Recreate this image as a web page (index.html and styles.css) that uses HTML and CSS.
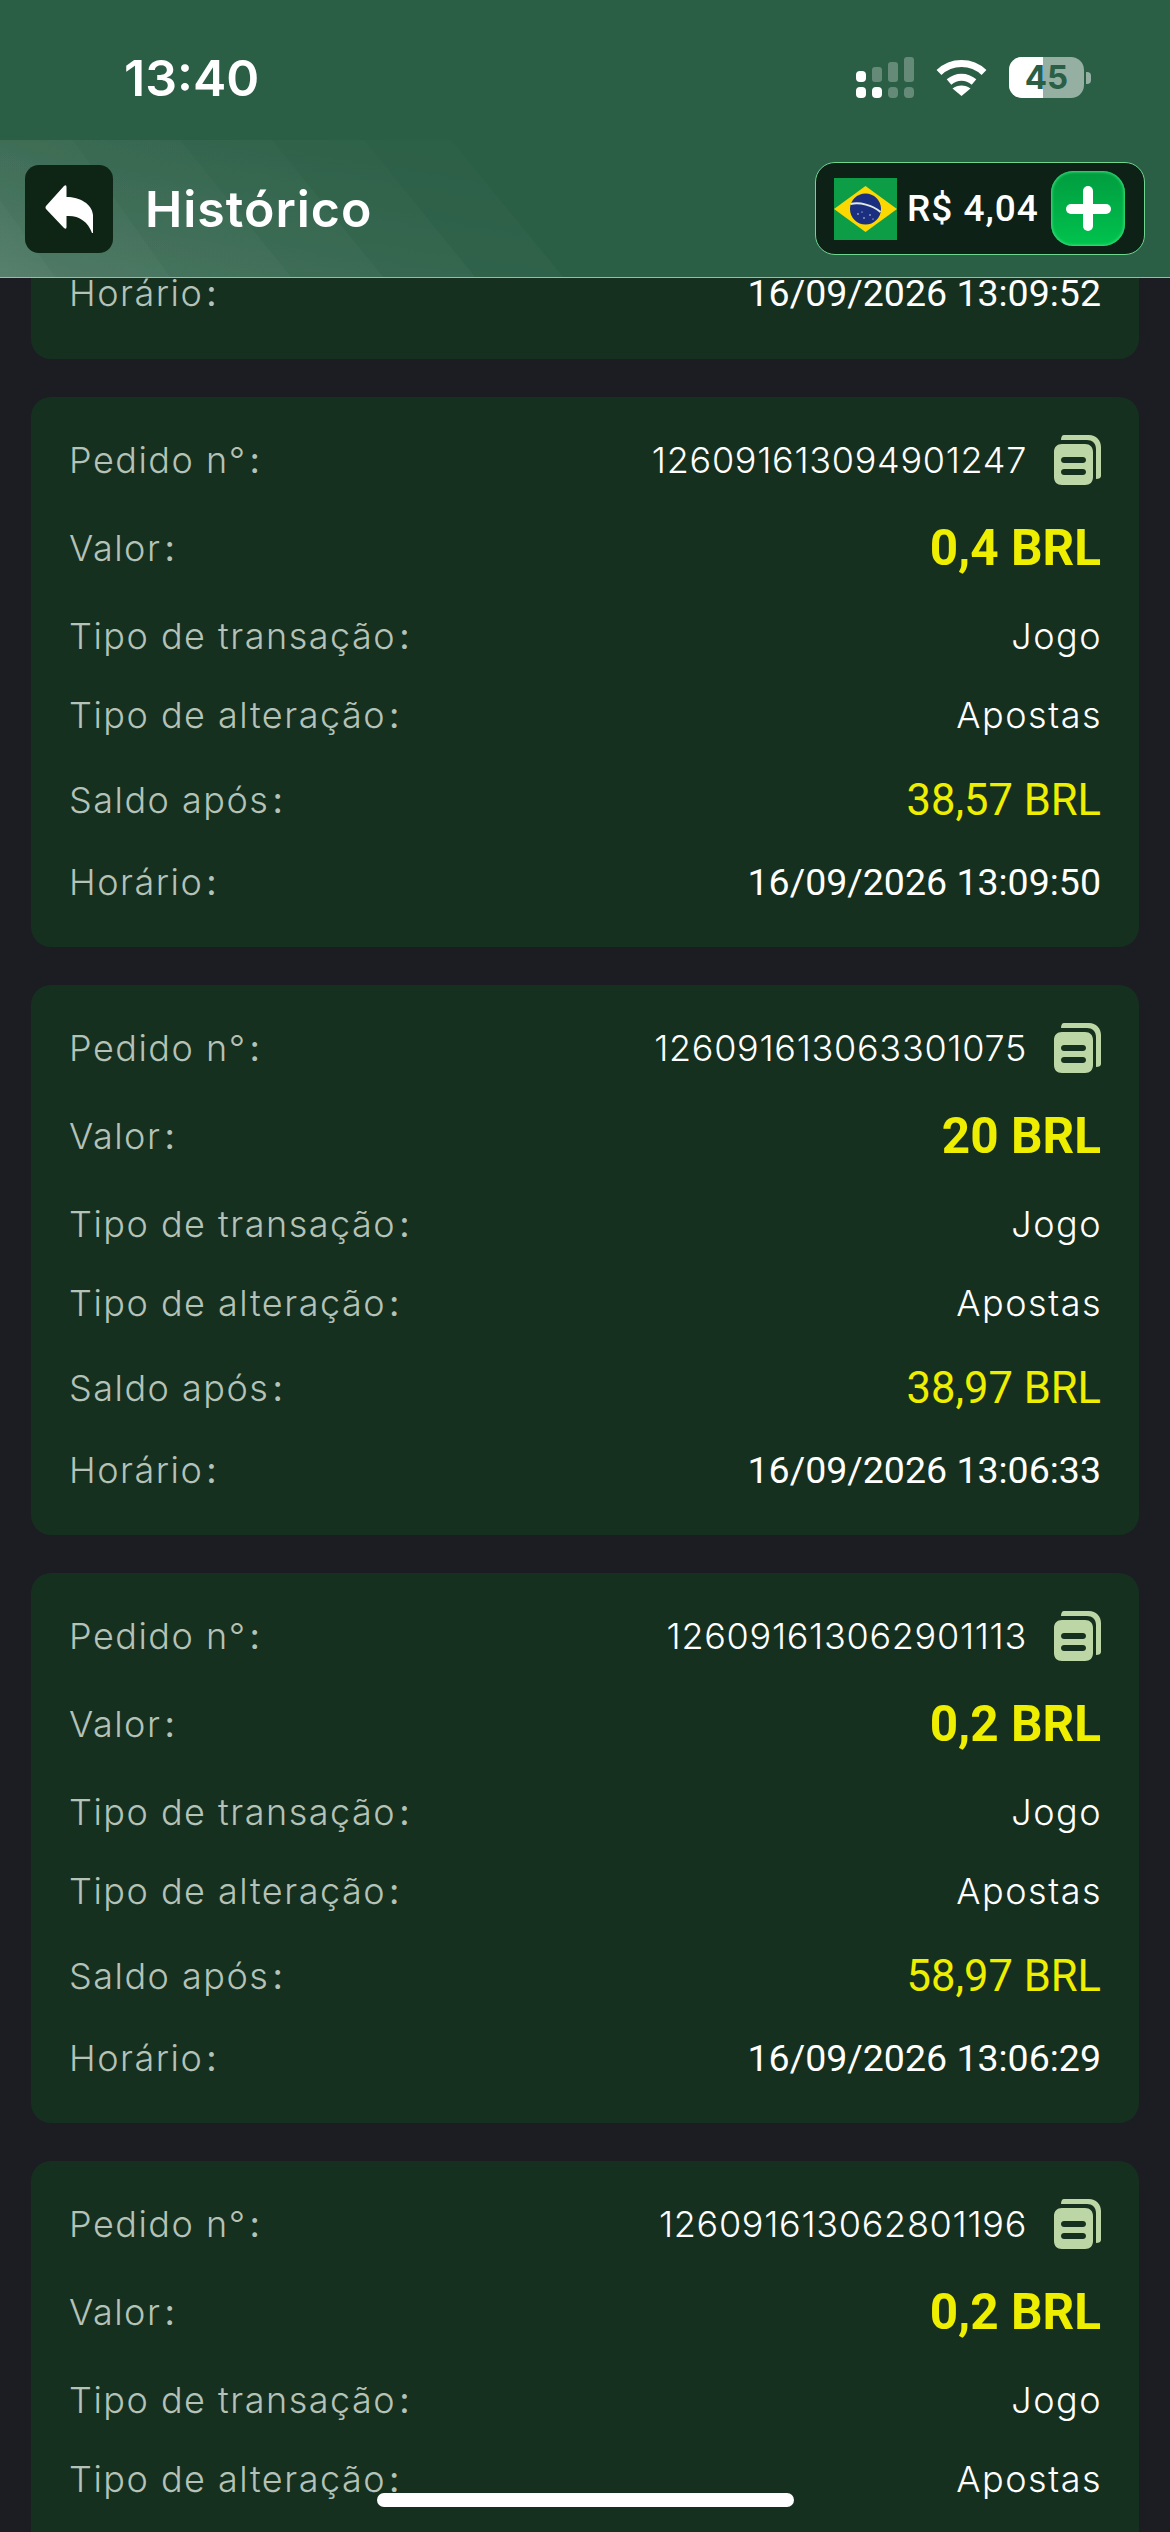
FILE: index.html
```html
<!DOCTYPE html>
<html lang="pt-BR">
<head>
<meta charset="utf-8">
<title>Histórico</title>
<link rel="stylesheet" href="styles.css">
</head>
<body>
<svg class="defs" width="0" height="0" aria-hidden="true">
  <symbol id="copy" viewBox="0 0 47 50">
    <path fill="#bcd6a6" d="M10 0H35C42 0 47 5 47 12V41C47 43 45 44 42 44V14C42 8 38 5 33 5H7C7 2 8 0 10 0Z"/>
    <path fill="#bcd6a6" fill-rule="evenodd" d="M8 9H31C36 9 39 12 39 17V42C39 47 36 50 31 50H8C3 50 0 47 0 42V17C0 12 3 9 8 9ZM10 22C8.500 22 7 23.200 7 25S8.500 28 10 28H29C30.500 28 32 26.800 32 25S30.500 22 29 22ZM10 34C8.500 34 7 35.200 7 37S8.500 40 10 40H29C30.500 40 32 38.800 32 37S30.500 34 29 34Z"/>
  </symbol>
</svg>

<header class="top">
  <svg class="stripes" viewBox="0 0 600 137" width="600" height="137" aria-hidden="true">
    <defs>
      <linearGradient id="fade" x1="0" y1="1" x2="0.7" y2="0">
        <stop offset="0" stop-color="#fff" stop-opacity="0.04"/>
        <stop offset="1" stop-color="#fff" stop-opacity="0.012"/>
      </linearGradient>
    </defs>
    <polygon fill="url(#fade)" points="0,60 0,137 55,137"/>
    <polygon fill="url(#fade)" points="0,0 73,0 170,137 0,137"/>
    <polygon fill="url(#fade)" points="0,0 180,0 291,137 0,137"/>
    <polygon fill="url(#fade)" points="0,0 272,0 383,137 0,137"/>
    <polygon fill="url(#fade)" points="0,0 364,0 475,137 0,137"/>
    <polygon fill="url(#fade)" points="0,0 451,0 563,137 0,137"/>
  </svg>
  <div class="status">
    <span class="clock">13:40</span>
    <div class="status-icons">
      <div class="signal">
        <i class="dot on"></i><i class="bar b1"></i><i class="bar b2"></i><i class="bar b3"></i>
        <i class="dot on"></i><i class="dot on"></i><i class="dot"></i><i class="dot"></i>
      </div>
      <svg class="wifi" viewBox="0 0 51 37" width="51" height="37" aria-hidden="true">
        <path d="M3 13.500C15.500 1.500 35.500 1.500 48 13.500" fill="none" stroke="#fff" stroke-width="7"/>
        <path d="M13 23C20.500 16.500 30.500 16.500 38 23" fill="none" stroke="#fff" stroke-width="7"/>
        <path d="M16.500 29.500C21.500 25.500 29.500 25.500 34.500 29.500L25.500 37Z" fill="#fff"/>
      </svg>
      <div class="battery"><div class="battery-level"></div><span class="battery-num">45</span></div>
      <i class="battery-nub"></i>
    </div>
  </div>
  <div class="bar-nav">
    <button class="back" type="button" aria-label="Voltar">
      <svg viewBox="0 0 48 48" width="48" height="48" aria-hidden="true">
        <path fill="#fff" d="M19 1L1 21Q0 22.500 1 24L19 43Q21.500 45 21.500 42V31C33 30 43 36 47 48H48V30C47 19 35 12 21.500 12V2Q21.500 -1 19 1Z"/>
      </svg>
    </button>
    <h1 class="title">Histórico</h1>
    <div class="wallet">
      <svg class="flag" viewBox="0 0 63 62" width="63" height="62" aria-hidden="true">
        <rect width="63" height="62" fill="#0c9d46"/>
        <polygon points="31.500,8 63,31 31.500,54 0,31" fill="#fcd803"/>
        <circle cx="31.500" cy="31" r="15.500" fill="#1a2f80"/>
        <path d="M16.500 26C26 24 38 27 46.500 34" fill="none" stroke="#dfe9e4" stroke-width="2"/>
        <g fill="#fff"><circle cx="24" cy="36" r=".7"/><circle cx="30" cy="40" r=".7"/><circle cx="36" cy="37" r=".7"/><circle cx="28" cy="34" r=".6"/><circle cx="39" cy="41" r=".6"/></g>
      </svg>
      <span class="wallet-amount">R$ 4,04</span>
      <button class="add" type="button" aria-label="Adicionar"><i class="add-h"></i><i class="add-v"></i></button>
    </div>
  </div>
</header>

<main class="list">
  <article class="card card-tail">
    <div class="row row-last"><span class="label">Horário<b class="colon">:</b></span><span class="time">16/09/2026 13:09:52</span></div>
  </article>

  <article class="card">
    <div class="row"><span class="label">Pedido n°<b class="colon">:</b></span><span class="order"><span class="value id">126091613094901247</span><svg class="copy" width="47" height="50"><use href="#copy"/></svg></span></div>
    <div class="row row-amount"><span class="label">Valor<b class="colon">:</b></span><span class="amount">0,4 BRL</span></div>
    <div class="row row-type"><span class="label">Tipo de transação<b class="colon">:</b></span><span class="value">Jogo</span></div>
    <div class="row row-change"><span class="label">Tipo de alteração<b class="colon">:</b></span><span class="value">Apostas</span></div>
    <div class="row row-balance"><span class="label">Saldo após<b class="colon">:</b></span><span class="balance">38,57 BRL</span></div>
    <div class="row row-last"><span class="label">Horário<b class="colon">:</b></span><span class="time">16/09/2026 13:09:50</span></div>
  </article>

  <article class="card">
    <div class="row"><span class="label">Pedido n°<b class="colon">:</b></span><span class="order"><span class="value id">126091613063301075</span><svg class="copy" width="47" height="50"><use href="#copy"/></svg></span></div>
    <div class="row row-amount"><span class="label">Valor<b class="colon">:</b></span><span class="amount">20 BRL</span></div>
    <div class="row row-type"><span class="label">Tipo de transação<b class="colon">:</b></span><span class="value">Jogo</span></div>
    <div class="row row-change"><span class="label">Tipo de alteração<b class="colon">:</b></span><span class="value">Apostas</span></div>
    <div class="row row-balance"><span class="label">Saldo após<b class="colon">:</b></span><span class="balance">38,97 BRL</span></div>
    <div class="row row-last"><span class="label">Horário<b class="colon">:</b></span><span class="time">16/09/2026 13:06:33</span></div>
  </article>

  <article class="card">
    <div class="row"><span class="label">Pedido n°<b class="colon">:</b></span><span class="order"><span class="value id">126091613062901113</span><svg class="copy" width="47" height="50"><use href="#copy"/></svg></span></div>
    <div class="row row-amount"><span class="label">Valor<b class="colon">:</b></span><span class="amount">0,2 BRL</span></div>
    <div class="row row-type"><span class="label">Tipo de transação<b class="colon">:</b></span><span class="value">Jogo</span></div>
    <div class="row row-change"><span class="label">Tipo de alteração<b class="colon">:</b></span><span class="value">Apostas</span></div>
    <div class="row row-balance"><span class="label">Saldo após<b class="colon">:</b></span><span class="balance">58,97 BRL</span></div>
    <div class="row row-last"><span class="label">Horário<b class="colon">:</b></span><span class="time">16/09/2026 13:06:29</span></div>
  </article>

  <article class="card">
    <div class="row"><span class="label">Pedido n°<b class="colon">:</b></span><span class="order"><span class="value id">126091613062801196</span><svg class="copy" width="47" height="50"><use href="#copy"/></svg></span></div>
    <div class="row row-amount"><span class="label">Valor<b class="colon">:</b></span><span class="amount">0,2 BRL</span></div>
    <div class="row row-type"><span class="label">Tipo de transação<b class="colon">:</b></span><span class="value">Jogo</span></div>
    <div class="row row-change"><span class="label">Tipo de alteração<b class="colon">:</b></span><span class="value">Apostas</span></div>
  </article>
</main>

<div class="home-indicator"></div>
</body>
</html>
```
FILE: styles.css
```css
* { box-sizing: border-box; }
html, body { margin: 0; height: 2532px; overflow: hidden; }
body { position: relative; background: #1b1d22; font-family: "Inter", "Liberation Sans", sans-serif; color: #fff; }
.defs { position: absolute; }

/* Header overlays the scrolled list */
.top { position: absolute; top: 0; left: 0; right: 0; z-index: 2; height: 278px; background: #2a5e45; border-bottom: 1px solid #6fd68f; overflow: hidden; }
.stripes { position: absolute; left: 0; bottom: 0; }
.status { position: relative; display: flex; justify-content: space-between; height: 140px; padding: 57px 79px 0 124px; }
.clock { font-size: 50px; line-height: 42px; font-weight: 600; letter-spacing: 0; }
.status-icons { display: flex; align-items: flex-start; gap: 0; }
.signal { display: grid; grid-template-columns: repeat(4, 10px); grid-template-rows: 25px 11px; column-gap: 6px; row-gap: 5px; align-items: end; }
.signal i { display: block; width: 10px; background: rgba(255,255,255,.28); border-radius: 3px; }
.dot { height: 11px; border-radius: 4px !important; }
.dot.on { background: #fff !important; }
.b1 { height: 15px; }
.b2 { height: 20px; }
.b3 { height: 25px; }
.wifi { margin: 2px 0 0 22px; }
.battery { position: relative; width: 75px; height: 41px; margin-left: 22px; border-radius: 13px; background: rgba(255,255,255,.5); overflow: hidden; }
.battery-level { width: 34px; height: 100%; background: #fff; }
.battery-num { position: absolute; inset: 0; text-align: center; font-size: 33px; line-height: 41px; font-weight: 700; color: #2a5e45; }
.battery-nub { width: 5px; height: 12px; margin: 15px 0 0 2px; background: rgba(255,255,255,.5); border-radius: 0 4px 4px 0; }

.bar-nav { position: relative; display: flex; align-items: center; height: 137px; padding: 0 25px 0 25px; }
.back { display: flex; align-items: center; justify-content: center; width: 88px; height: 88px; margin: 0; padding: 0; border: 0; border-radius: 14px; background: #0e2516; }
.title { margin: 0 0 0 32px; font-size: 50px; line-height: 56px; font-weight: 600; letter-spacing: 1px; }
.wallet { display: flex; align-items: center; width: 330px; height: 93px; margin-left: auto; padding: 0 19px 0 18px; border: 1.500px solid #6fd68f; border-radius: 20px; background: #0e2116; }
.flag { flex: none; }
.wallet-amount { margin-left: 10px; font-family: "Roboto", sans-serif; font-size: 37px; font-weight: 500; letter-spacing: 1px; white-space: nowrap; }
.add { position: relative; flex: none; width: 74px; height: 75px; margin: 0 0 0 auto; padding: 0; border: 0; border-radius: 22px; background: linear-gradient(#009c3f, #00c34e); box-shadow: inset 0 0 3px 1px #3fe07f; }
.add-h, .add-v { position: absolute; background: #fff; border-radius: 5px; }
.add-h { left: 15px; top: 33px; width: 45px; height: 10px; }
.add-v { left: 32px; top: 15px; width: 10px; height: 45px; }

/* List */
.list { display: flex; flex-direction: column; gap: 38px; padding: 0 31px; }
.card { height: 550px; padding: 21px 38px 0; border-radius: 20px; background: #16301f; }
.card-tail { height: 359px; display: flex; flex-direction: column; justify-content: flex-end; padding-bottom: 24px; }
.row { display: flex; align-items: center; justify-content: space-between; height: 84px; white-space: nowrap; }
.row-amount { margin-top: 4px; }
.row-type { margin-top: 4px; }
.row-change { margin-top: -5px; }
.row-balance { margin-top: 1px; }
.row-last { margin-top: -2px; }
.label { font-size: 36px; font-weight: 300; letter-spacing: 1.500px; color: #b4c2b8; }
.colon { margin-left: 3px; font-weight: 400; }
.value { margin-right: -1px; font-size: 36px; font-weight: 300; letter-spacing: 1.500px; color: #fff; }
.value.id { margin-right: 0; letter-spacing: 0.700px; }
.order { display: flex; align-items: center; gap: 27px; }
.copy { flex: none; }
.amount { font-family: "Roboto", sans-serif; font-size: 49.500px; font-weight: 700; color: #eeee00; }
.balance { font-family: "Roboto", sans-serif; font-size: 43.500px; color: #eeee00; }
.time { font-family: "Roboto", sans-serif; font-size: 37.500px; color: #fff; }

.home-indicator { position: absolute; z-index: 3; left: 377px; top: 2493px; width: 417px; height: 14px; border-radius: 7px; background: #fff; }
```
